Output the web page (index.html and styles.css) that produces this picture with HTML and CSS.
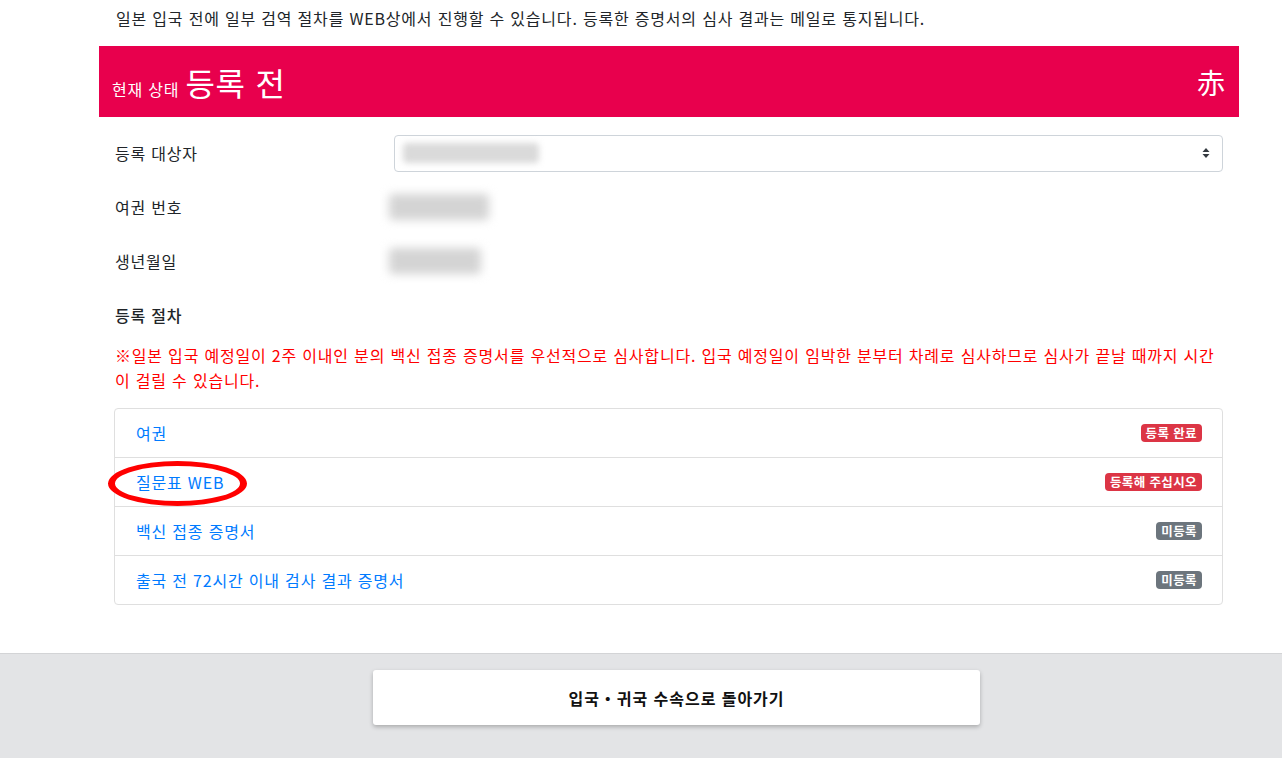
FILE: index.html
```html
<!DOCTYPE html>
<html lang="ko">
<head>
<meta charset="utf-8">
<title>등록 상태</title>
<link rel="stylesheet" href="styles.css">
</head>
<body>
<main class="container">
  <p class="intro">일본 입국 전에 일부 검역 절차를 WEB상에서 진행할 수 있습니다. 등록한 증명서의 심사 결과는 메일로 통지됩니다.</p>
  <div class="banner">
    <div class="status"><span class="status-label">현재 상태</span><span class="status-value">등록 전</span></div>
    <span class="status-mark">赤</span>
  </div>
  <div class="form">
    <div class="form-row">
      <span class="label">등록 대상자</span>
      <div class="select">
        <span class="blur blur-select"></span>
        <svg class="caret" width="8" height="12" viewBox="0 0 8 12"><path d="M4 1 L7.5 5 H0.5 Z M4 11 L0.5 7 H7.5 Z" fill="#343a40"/></svg>
      </div>
    </div>
    <div class="form-row">
      <span class="label">여권 번호</span>
      <span class="blur blur-pass"></span>
    </div>
    <div class="form-row">
      <span class="label">생년월일</span>
      <span class="blur blur-birth"></span>
    </div>
  </div>
  <h2 class="section-title">등록 절차</h2>
  <p class="notice">※일본 입국 예정일이 2주 이내인 분의 백신 접종 증명서를 우선적으로 심사합니다. 입국 예정일이 임박한 분부터 차례로 심사하므로 심사가 끝날 때까지 시간이 걸릴 수 있습니다.</p>
  <ul class="list">
    <li class="item"><a class="link">여권</a><span class="badge badge-red">등록 완료</span></li>
    <li class="item"><a class="link">질문표 WEB</a><span class="badge badge-red">등록해 주십시오</span><span class="circle"></span></li>
    <li class="item"><a class="link">백신 접종 증명서</a><span class="badge badge-grey">미등록</span></li>
    <li class="item"><a class="link">출국 전 72시간 이내 검사 결과 증명서</a><span class="badge badge-grey">미등록</span></li>
  </ul>
</main>
<footer class="footer">
  <button class="back">입국・귀국 수속으로 돌아가기</button>
</footer>
</body>
</html>
```
FILE: styles.css
```css
* { box-sizing: border-box; }
html, body { margin: 0; padding: 0; }
body {
  font-family: "Noto Sans CJK KR", "Noto Sans", sans-serif;
  color: #212529;
  font-size: 16px;
  letter-spacing: 0.05em;
  background: #fff;
}
.container {
  width: 1140px;
  margin-left: 99px;
  padding: 0 16px 48px;
}
.intro {
  margin: 0;
  padding: 6px 0 0 1px;
  font-size: 16px;
  line-height: 24px;
  height: 46px;
}
.banner {
  margin: 0 -16px;
  height: 71px;
  background: #e8004d;
  color: #fff;
  display: flex;
  align-items: center;
  justify-content: space-between;
  padding: 0 14px 0 13px;
}
.status { display: flex; align-items: baseline; gap: 6px; }
.status-label { font-size: 16px; }
.status-value { font-size: 32px; line-height: 40px; }
.status-mark { font-size: 28px; line-height: 40px; letter-spacing: 0; font-family: "Noto Sans CJK JP", sans-serif; }
.form { padding-top: 17px; }
.form-row {
  display: grid;
  grid-template-columns: 279px 1fr;
  align-items: center;
  height: 38px;
  margin-bottom: 16px;
}
.select {
  height: 37px;
  border: 1px solid #ced4da;
  border-radius: 4px;
  display: flex;
  align-items: center;
  justify-content: space-between;
  padding: 0 12px 0 8px;
}
.caret { display: block; }
.blur {
  display: block;
  background: #d4d4d4;
  filter: blur(5px);
  border-radius: 4px;
}
.blur-select { width: 136px; height: 20px; background: #dadada; filter: blur(3px); }
.blur-pass { width: 100px; height: 26px; margin-left: -5px; }
.blur-birth { width: 92px; height: 26px; margin-left: -5px; }
.section-title {
  margin: 23px 0 0;
  font-size: 16px;
  font-weight: 500;
  line-height: 24px;
}
.notice {
  margin: 16px 0 15px;
  color: #ff0000;
  font-size: 16px;
  line-height: 25px;
}
.list {
  list-style: none;
  margin: 0;
  padding: 0;
  border: 1px solid #dfdfdf;
  border-radius: 4px;
  margin-left: -1px;
}
.item {
  position: relative;
  height: 49px;
  display: flex;
  align-items: center;
  justify-content: space-between;
  padding: 0 20px 0 21px;
  border-top: 1px solid #dfdfdf;
}
.item:first-child { border-top: none; height: 48px; }
.link { color: #007bff; font-size: 16px; }
.badge {
  color: #fff;
  font-size: 12.5px;
  font-weight: 700;
  letter-spacing: 0.03em;
  line-height: 18px;
  padding: 0 5px;
  border-radius: 4px;
}
.badge-red { background: #dc3545; }
.badge-grey { background: #6c757d; }
.circle {
  position: absolute;
  left: -7px;
  top: 3px;
  width: 139px;
  height: 45px;
  border: 7px solid #f00;
  border-top-width: 5px;
  border-bottom-width: 5px;
  border-radius: 50%;
}
.footer {
  background: #e3e4e6;
  border-top: 1px solid #d3d4d6;
  height: 105px;
  padding: 16px 0 0 373px;
}
.back {
  width: 607px;
  height: 55px;
  background: #fff;
  border: none;
  border-radius: 3px;
  box-shadow: 0 2px 4px rgba(0,0,0,0.25);
  font-family: "Noto Sans CJK KR", sans-serif;
  font-size: 16px;
  letter-spacing: 0.06em;
  font-weight: 700;
  color: #111;
}
```
